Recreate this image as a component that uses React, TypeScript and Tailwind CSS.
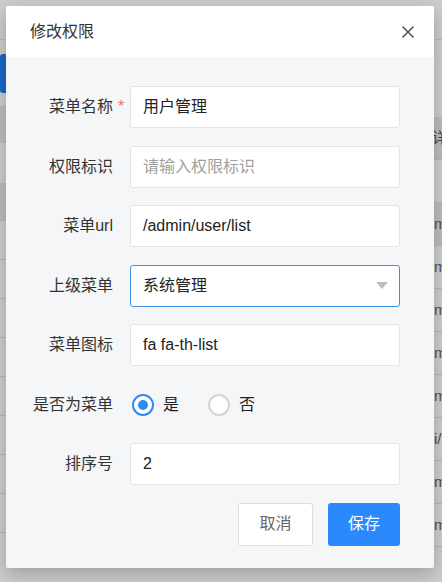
import React from 'react'

const FONT = '"Liberation Sans", "Noto Sans CJK SC", sans-serif'

function Field({ label, required, children }: { label: string; required?: boolean; children: React.ReactNode }) {
  return (
    <div className="flex h-[42px] items-center">
      <div className="w-[107px] text-right text-[16px] text-[#333]">{label}</div>
      <div className="w-[17px] pl-[5px] text-[16px] leading-none text-[#f56c6c]">{required ? '*' : ''}</div>
      <div className="h-full flex-1">{children}</div>
    </div>
  )
}

function TextBox({ value, placeholder }: { value?: string; placeholder?: string }) {
  return (
    <div className="flex h-full items-center rounded-[3px] border border-[#e4e4e4] bg-white px-[12px] text-[16px]">
      {value ? <span className="text-[#222]">{value}</span> : <span className="text-[#a0a0a0]">{placeholder}</span>}
    </div>
  )
}

function Radio({ checked, label }: { checked?: boolean; label: string }) {
  return (
    <div className="flex items-center">
      <span
        className={`flex h-[22px] w-[22px] items-center justify-center rounded-full border-2 bg-white ${
          checked ? 'border-[#2d8cf0]' : 'border-[#d4d4d4]'
        }`}
      >
        {checked && <span className="h-[10px] w-[10px] rounded-full bg-[#2d8cf0]" />}
      </span>
      <span className="ml-[9px] text-[16px] text-[#222]">{label}</span>
    </div>
  )
}

export default function App() {
  const leftRows = Array.from({ length: 8 })
  const rightRows = ['m', 'm', 'm', 'm', 'm', 'i/', 'm', 'm']

  return (
    <div className="relative h-[582px] w-[442px] overflow-hidden bg-white" style={{ fontFamily: FONT }}>
      {/* page behind the dialog */}
      <div className="flex h-full flex-col">
        <div className="h-[40px] shrink-0 border-b border-[#e6e6e6]" />
        <div className="flex flex-1">
          <div className="flex w-[221px] flex-col">
            <div className="mt-[14px] h-[39px] w-[80px] rounded-[3px] bg-[#2080fa]" />
            <div className="h-[13px]" />
            <div className="h-[37px] bg-[#ececec]" />
            <div className="h-[40px]" />
            <div className="h-[38px] border-b border-[#e2e2e2] bg-[#ececec]" />
            {leftRows.map((_, i) => (
              <div key={i} className="h-[39px] border-b border-[#e2e2e2]" />
            ))}
          </div>
          <div className="flex flex-1 flex-col overflow-hidden">
            <div className="h-[77px] shrink-0" />
            <div className="flex h-[43px] shrink-0 items-center whitespace-nowrap border-b border-[#e2e2e2] bg-[#ececec] pl-[211px] text-[15px] text-[#555]">
              详情
            </div>
            <div className="h-[43px] shrink-0 border-b border-[#e2e2e2]" />
            {rightRows.map((t, i) => (
              <div
                key={i}
                className={`flex h-[43px] shrink-0 items-center whitespace-nowrap border-b border-[#e2e2e2] pl-[213px] text-[15px] text-[#666] ${
                  i === 0 ? 'bg-[#ececec]' : ''
                }`}
              >
                {t}
              </div>
            ))}
          </div>
        </div>
      </div>

      {/* mask */}
      <div className="absolute inset-0 bg-black/20" />

      {/* dialog */}
      <div className="absolute left-[6px] top-[6px] flex h-[562px] w-[428px] flex-col overflow-hidden rounded-[2px] bg-[#f5f6f8] shadow-[0_6px_18px_rgba(0,0,0,0.22)]">
        <div className="flex h-[51px] shrink-0 items-center justify-between bg-white pl-[24px] pr-[20px]">
          <span className="text-[16px] text-[#333]">修改权限</span>
          <svg width="12" height="12" viewBox="0 0 12 12">
            <path d="M1 1L11 11M11 1L1 11" stroke="#555" strokeWidth="1.6" strokeLinecap="round" />
          </svg>
        </div>

        <div className="flex flex-col gap-[17.5px] pr-[34px] pt-[29px]">
          <Field label="菜单名称" required>
            <TextBox value="用户管理" />
          </Field>
          <Field label="权限标识">
            <TextBox placeholder="请输入权限标识" />
          </Field>
          <Field label="菜单url">
            <TextBox value="/admin/user/list" />
          </Field>
          <Field label="上级菜单">
            <div className="flex h-full items-center justify-between rounded-[3px] border border-[#3c8ee8] bg-white pl-[12px] pr-[11px] text-[16px] text-[#222]">
              <span>系统管理</span>
              <svg width="12" height="7" viewBox="0 0 12 7">
                <path d="M0 0H12L6 7Z" fill="#bdbdbd" />
              </svg>
            </div>
          </Field>
          <Field label="菜单图标">
            <TextBox value="fa fa-th-list" />
          </Field>
          <Field label="是否为菜单">
            <div className="flex h-full items-center gap-[29px] pl-[2px]">
              <Radio checked label="是" />
              <Radio label="否" />
            </div>
          </Field>
          <Field label="排序号">
            <TextBox value="2" />
          </Field>
          <div className="flex justify-end gap-[15px]">
            <button className="h-[43px] w-[75px] rounded-[3px] border border-[#dedede] bg-white text-[16px] text-[#666]">
              取消
            </button>
            <button className="h-[43px] w-[72px] rounded-[3px] bg-[#2a89fd] text-[16px] text-white">保存</button>
          </div>
        </div>
      </div>
    </div>
  )
}
